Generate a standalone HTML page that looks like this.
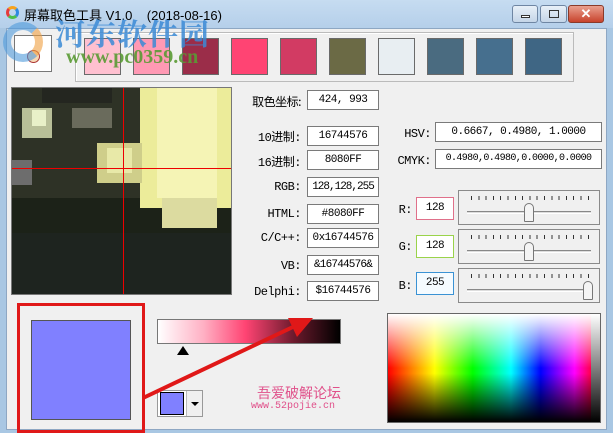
<!DOCTYPE html>
<html><head><meta charset="utf-8"><style>
*{margin:0;padding:0;box-sizing:border-box}
body{width:613px;height:430px;overflow:hidden;background:#a9c7e3;font-family:"Liberation Sans","Noto Sans CJK SC",sans-serif;position:relative}
.a{position:absolute}
.title{left:0;top:0;width:613px;height:28px;background:linear-gradient(#c6dcf1,#b5cfea)}
.body{left:6px;top:28px;width:601px;height:402px;background:#f0f0f0;border:1px solid #8ea7c3}
.f{position:absolute;background:#fff;border:1px solid #7a7a7a;font:11px "Liberation Mono","Noto Sans CJK SC",monospace;letter-spacing:-0.5px;white-space:nowrap;overflow:hidden;text-align:center;line-height:18px;color:#000}
.l{position:absolute;font:12px "Liberation Mono","Noto Sans CJK SC",monospace;letter-spacing:-0.5px;text-align:right;width:70px;color:#000}
.sw{position:absolute;top:38px;width:37px;height:37px;border:1px solid #6a6a6a}
.sl{position:absolute;left:458px;width:142px;height:35px;border:1px solid #8a8a8a}
.sl .tk{position:absolute;left:12px;top:5px;width:118px;height:4px;background:repeating-linear-gradient(90deg,#333 0 1px,transparent 1px 7.3px)}
.sl .tr{position:absolute;left:8px;top:20px;width:124px;height:3px;border-top:1px solid #888;border-bottom:1px solid #fff;background:#ddd}
.sl .th{position:absolute;top:12px;width:10px;height:19px;background:#f4f4f4;border:1px solid #777;border-radius:5px 5px 1px 1px}
.btn{position:absolute;top:5px;height:18px;border:1px solid #6f86a3;border-radius:3px;background:linear-gradient(#e8f0f8,#c5d5e8)}
</style></head><body>
<div class="a title"></div>
<div class="a" style="left:6px;top:6px;width:13px;height:13px;border-radius:50%;border:3px solid;border-color:#f7a21b #2e8ae0 #4cc04a #e63b3b"></div>
<div class="a" style="left:24px;top:5px;font-size:13px;color:#000">屏幕取色工具 V1.0&nbsp;&nbsp;&nbsp;&nbsp;(2018-08-16)</div>
<div class="btn" style="left:512px;width:26px"><div class="a" style="left:8px;top:9px;width:9px;height:3px;border:1px solid #333;background:#fff"></div></div>
<div class="btn" style="left:540px;width:27px"><div class="a" style="left:8px;top:4px;width:10px;height:8px;border:1px solid #333"></div></div>
<div class="btn" style="left:568px;width:36px;background:linear-gradient(#e9a08f,#c8432c);border-color:#8a3a2a;color:#fff;font:bold 13px 'Liberation Sans';text-align:center;line-height:16px">✕</div>
<div class="a body"></div>
<div class="a" style="left:14px;top:35px;width:38px;height:37px;background:#fff;border:1px solid #777"></div>
<div class="a" style="left:27px;top:50px;width:13px;height:13px;border-radius:50%;border:1px solid #a33;background:#f8d9b6"></div>
<div class="a" style="left:75px;top:32px;width:499px;height:50px;border:1px solid #bbb;box-shadow:1px 1px 0 #fff inset"></div>
<div class="sw" style="left:84px;background:#ffc0d0"></div>
<div class="sw" style="left:133px;background:#ff99b4"></div>
<div class="sw" style="left:182px;background:#9b2d49"></div>
<div class="sw" style="left:231px;background:#ff4473"></div>
<div class="sw" style="left:280px;background:#d23b63"></div>
<div class="sw" style="left:329px;background:#6b6a45"></div>
<div class="sw" style="left:378px;background:#e8eef2"></div>
<div class="sw" style="left:427px;background:#4a6b80"></div>
<div class="sw" style="left:476px;background:#466f8e"></div>
<div class="sw" style="left:525px;background:#3f6684"></div>
<div class="a" style="left:55px;top:10px;font:bold 30px 'Noto Serif CJK SC',serif;color:#3b8ad6;opacity:.85;letter-spacing:1px">河东软件园</div>
<div class="a" style="left:66px;top:46px;font:bold 20px 'Liberation Serif',serif;color:#5a9b34;opacity:.9">www.pc0359.cn</div>
<div class="a" style="left:3px;top:22px;width:40px;height:40px;border-radius:50%;border:8px solid #4f9bdc;border-right-color:#f0a040;opacity:.6"></div>

<div class="a" style="left:11px;top:87px;width:221px;height:208px;background:#1c2218;border:1px solid #777;overflow:hidden">
<div class="a" style="left:0;top:0;width:221px;height:110px;background:#2e3226"></div>
<div class="a" style="left:128px;top:0;width:93px;height:120px;background:#ecec9a"></div>
<div class="a" style="left:145px;top:0;width:60px;height:110px;background:#f5f4b5"></div>
<div class="a" style="left:85px;top:55px;width:45px;height:40px;background:#cfce8a"></div>
<div class="a" style="left:95px;top:60px;width:25px;height:25px;background:#e8e9a8"></div>
<div class="a" style="left:10px;top:20px;width:30px;height:30px;background:#b8bf98"></div>
<div class="a" style="left:20px;top:22px;width:14px;height:16px;background:#e8f0c8"></div>
<div class="a" style="left:0;top:72px;width:20px;height:25px;background:#6d6d6d"></div>
<div class="a" style="left:150px;top:110px;width:55px;height:30px;background:#dcdba0"></div>
<div class="a" style="left:30px;top:0;width:70px;height:15px;background:#242620"></div>
<div class="a" style="left:60px;top:20px;width:40px;height:20px;background:#6a6b5c"></div>
<div class="a" style="left:0;top:145px;width:221px;height:63px;background:#1e241f"></div>
<div class="a" style="left:0;top:80px;width:221px;height:1px;background:#e00"></div>
<div class="a" style="left:111px;top:0;width:1px;height:208px;background:#e00"></div>
</div>

<div class="l" style="left:231px;top:93px;font-family:'Noto Sans CJK SC',sans-serif">取色坐标:</div>
<div class="f" style="left:307px;top:90px;width:72px;height:20px">424, 993</div>
<div class="l" style="left:231px;top:128px">10进制:</div>
<div class="f" style="left:307px;top:126px;width:72px;height:20px">16744576</div>
<div class="l" style="left:231px;top:153px">16进制:</div>
<div class="f" style="left:307px;top:150px;width:72px;height:20px">8080FF</div>
<div class="l" style="left:231px;top:180px">RGB:</div>
<div class="f" style="left:307px;top:177px;width:72px;height:20px;letter-spacing:-1px">128,128,255</div>
<div class="l" style="left:231px;top:207px">HTML:</div>
<div class="f" style="left:307px;top:204px;width:72px;height:20px">#8080FF</div>
<div class="l" style="left:231px;top:231px">C/C++:</div>
<div class="f" style="left:307px;top:228px;width:72px;height:20px">0x16744576</div>
<div class="l" style="left:231px;top:259px">VB:</div>
<div class="f" style="left:307px;top:255px;width:72px;height:20px;letter-spacing:-0.8px">&amp;16744576&amp;</div>
<div class="l" style="left:231px;top:285px">Delphi:</div>
<div class="f" style="left:307px;top:281px;width:72px;height:20px">$16744576</div>
<div class="l" style="left:361px;top:127px">HSV:</div>
<div class="f" style="left:435px;top:122px;width:167px;height:20px">0.6667, 0.4980, 1.0000</div>
<div class="l" style="left:361px;top:154px">CMYK:</div>
<div class="f" style="left:435px;top:149px;width:167px;height:20px;font-size:10px;letter-spacing:-0.6px">0.4980,0.4980,0.0000,0.0000</div>

<div class="l" style="left:342px;top:203px">R:</div>
<div class="f" style="left:416px;top:197px;width:38px;height:23px;line-height:21px;border-color:#e0708a">128</div>
<div class="l" style="left:342px;top:240px">G:</div>
<div class="f" style="left:416px;top:235px;width:38px;height:23px;line-height:21px;border-color:#9ad34a">128</div>
<div class="l" style="left:342px;top:279px">B:</div>
<div class="f" style="left:416px;top:272px;width:38px;height:23px;line-height:21px;border-color:#3a92d4;background:#f5fbff">255</div>
<div class="sl" style="top:190px"><div class="tk"></div><div class="tr"></div><div class="th" style="left:65px"></div></div>
<div class="sl" style="top:229px"><div class="tk"></div><div class="tr"></div><div class="th" style="left:65px"></div></div>
<div class="sl" style="top:268px"><div class="tk"></div><div class="tr"></div><div class="th" style="left:124px"></div></div>

<div class="a" style="left:31px;top:320px;width:100px;height:100px;background:#8080ff;border:1px solid #555"></div>
<div class="a" style="left:17px;top:303px;width:128px;height:130px;border:3px solid #e01818"></div>
<div class="a" style="left:157px;top:319px;width:184px;height:25px;border:1px solid #777;background:linear-gradient(90deg,#fff 0%,#ffb0c4 25%,#ff4473 48%,#6a1a2c 75%,#000 100%)"></div>
<div class="a" style="left:177px;top:346px;width:0;height:0;border-left:6px solid transparent;border-right:6px solid transparent;border-bottom:9px solid #000"></div>
<div class="a" style="left:157px;top:390px;width:46px;height:27px;border:1px solid #999;background:#fff"></div>
<div class="a" style="left:160px;top:392px;width:24px;height:23px;background:#8080ff;border:1px solid #000"></div>
<div class="a" style="left:186px;top:391px;width:16px;height:25px;background:#f0f0f0;border-left:1px solid #bbb"></div>
<div class="a" style="left:191px;top:402px;border-left:4px solid transparent;border-right:4px solid transparent;border-top:4px solid #000"></div>
<div class="a" style="left:257px;top:383px;font:14px 'Noto Sans CJK SC',sans-serif;color:#e0508a">吾爱破解论坛</div>
<div class="a" style="left:251px;top:401px;font:10px 'Liberation Mono',monospace;color:#e0508a">www.52pojie.cn</div>
<svg class="a" style="left:0;top:0" width="613" height="430"><line x1="143" y1="398" x2="295" y2="326" stroke="#e01818" stroke-width="4"/><polygon points="313,318 288,318 297,337" fill="#e01818"/></svg>
<div class="a" style="left:387px;top:313px;width:214px;height:110px;border:1px solid #666;background:linear-gradient(#fff 0%,rgba(255,255,255,0) 50%,rgba(0,0,0,0) 55%,#000 100%),linear-gradient(90deg,#f00,#ff0 22%,#0f0 40%,#0ff 58%,#00f 72%,#f0f 88%,#f04 96%)"></div>
<div class="a" style="left:591px;top:314px;width:9px;height:108px;background:linear-gradient(#fff,#000)"></div>
</body></html>
